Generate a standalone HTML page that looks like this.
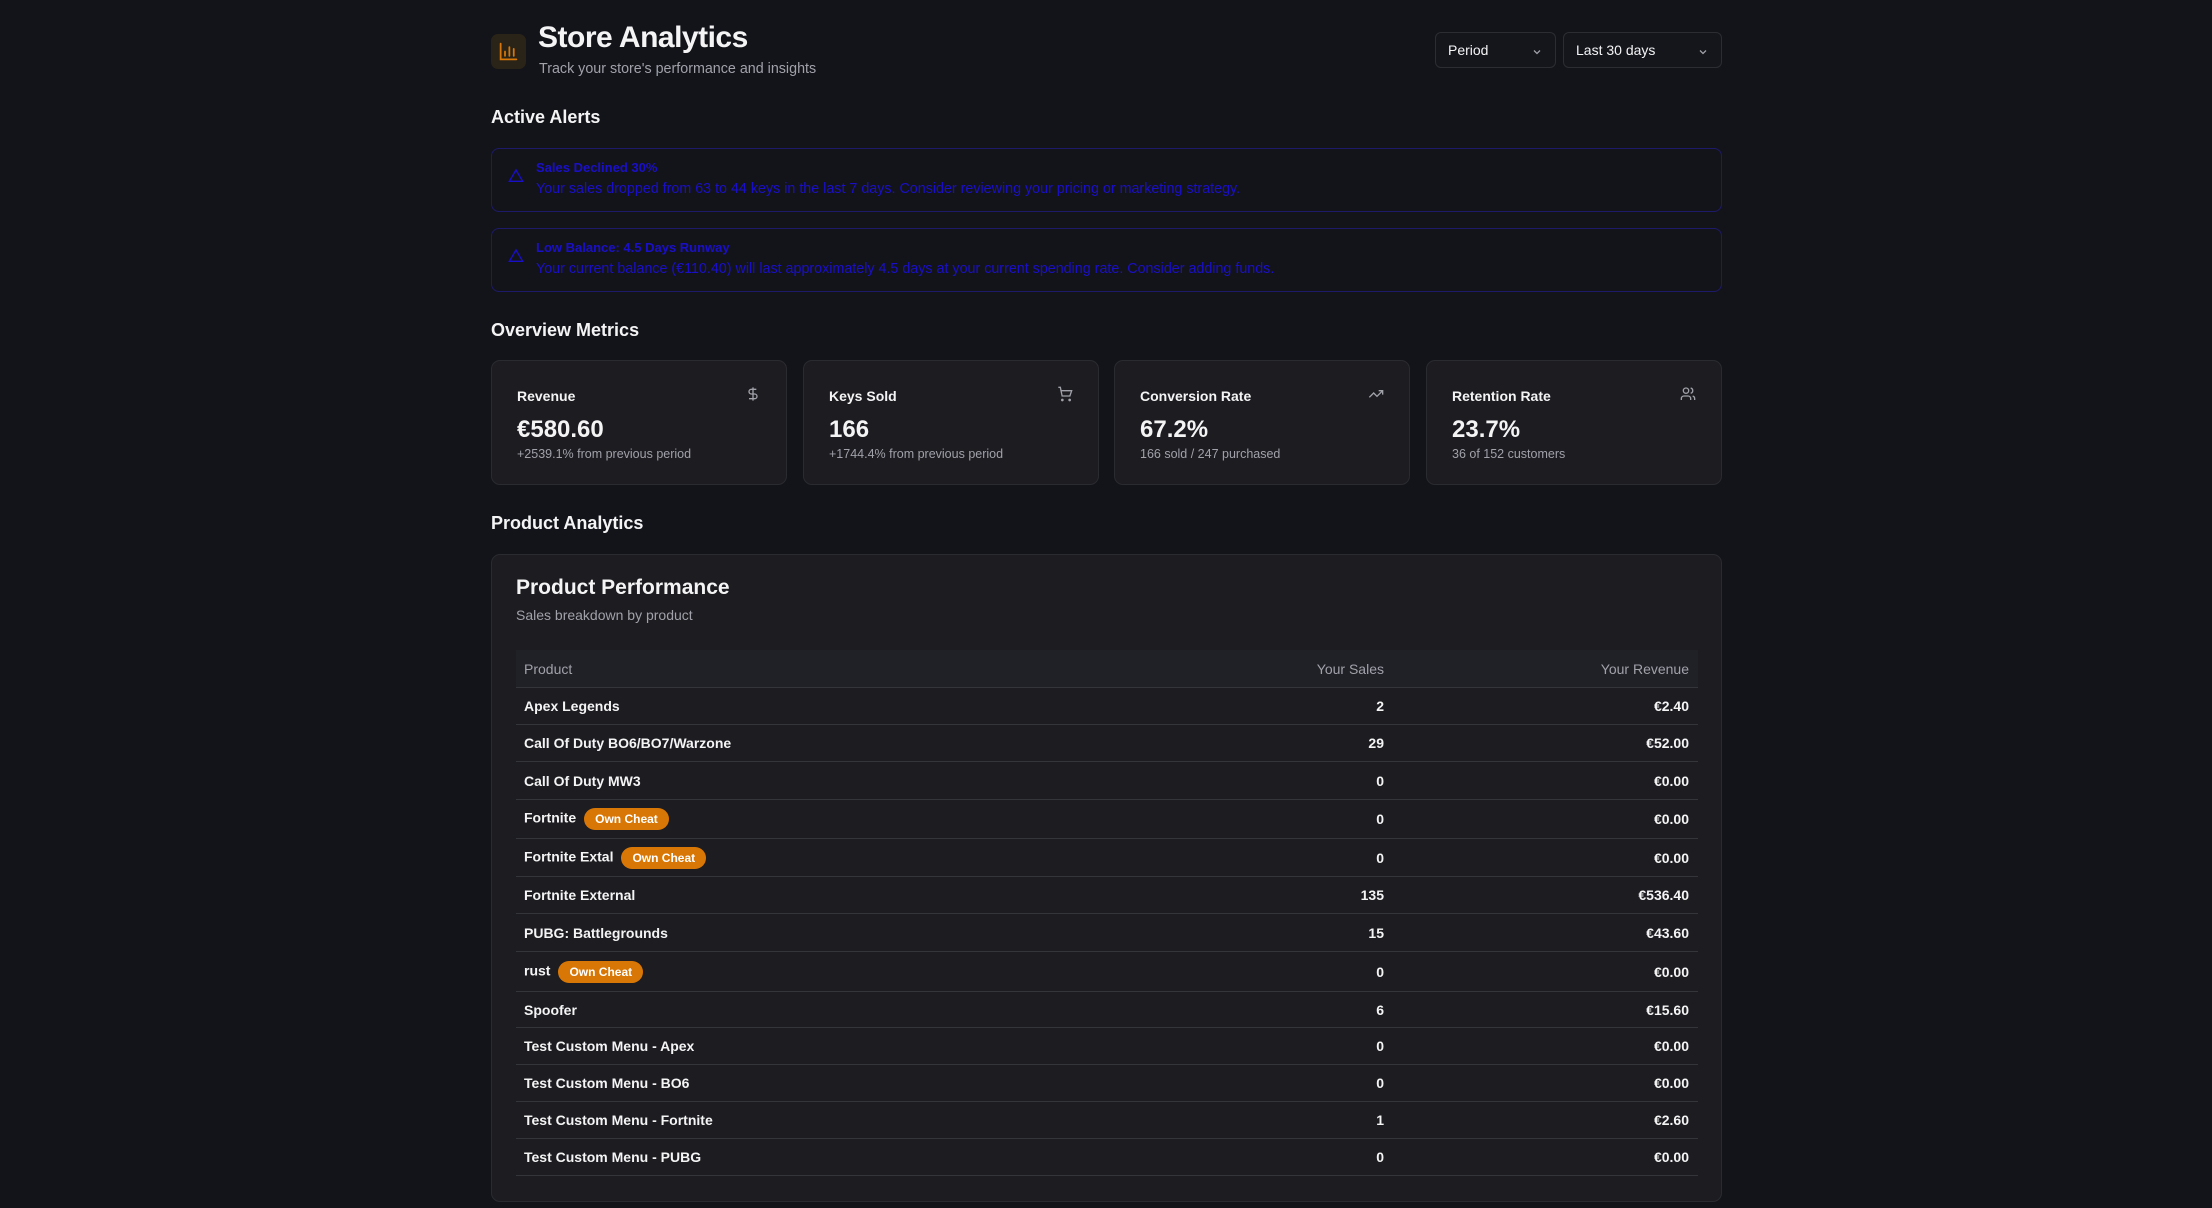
<!DOCTYPE html>
<html><head><meta charset="utf-8"><style>
*{box-sizing:border-box;margin:0;padding:0}
body{width:2212px;height:1208px;background:#13141a;font-family:"Liberation Sans",sans-serif;color:#f4f4f5;position:relative;overflow:hidden}
.a{position:absolute}
.h2{font-size:18px;font-weight:700;color:#f4f4f5}
.sel{position:absolute;top:32px;height:36px;border:1px solid #2c2d33;border-radius:6px;background:#15161c;font-size:14px;color:#f4f4f5;padding:9px 12px}
.sel svg{position:absolute;right:12px;top:13px}
.alert{position:absolute;left:491px;width:1231px;border:1px solid #1e1a6a;border-radius:8px;color:#1a0fc9}
.alert .t{position:absolute;left:44px;top:11px;font-size:13px;font-weight:700}
.alert .d{position:absolute;left:44px;top:32px;font-size:14.3px}
.alert svg{position:absolute;left:16px;top:19px}
.card{position:absolute;top:360px;width:296px;height:125px;background:#1c1c21;border:1px solid #2a2b30;border-radius:9px}
.card .l{position:absolute;left:25px;top:27px;font-size:14px;font-weight:700}
.card .v{position:absolute;left:25px;top:55px;font-size:24px;font-weight:700}
.card .s{position:absolute;left:25px;top:86px;font-size:12.5px;color:#a1a1aa}
.card svg{position:absolute;right:25px;top:25px}
.big{position:absolute;left:491px;top:554px;width:1231px;height:648px;background:#1c1c21;border:1px solid #2a2b30;border-radius:9px}
.row{position:absolute;left:516px;width:1182px;border-bottom:1px solid #34353b;font-size:14px;font-weight:600}
.row span{position:absolute;top:50%;transform:translateY(-50%)}
.c1{left:8px}.c2{right:314px}.c3{right:9px}
.b{display:inline-block;background:#d97706;color:#fff;font-size:12px;font-weight:700;border-radius:11px;padding:4px 11px;margin-left:8px;vertical-align:middle}
</style></head><body>
<div class="a" style="left:491px;top:34px;width:35px;height:35px;border-radius:7px;background:#2a2418"></div>
<svg class="a" style="left:498px;top:41px" width="21" height="21" viewBox="0 0 24 24" fill="none" stroke="#d97706" stroke-width="2" stroke-linecap="round"><path d="M3 3v18h18M8 17v-5M13 17V7M18 17v-8"/></svg>
<div class="a" style="left:538px;top:21px;font-size:30px;font-weight:700;letter-spacing:-0.5px">Store Analytics</div>
<div class="a" style="left:539px;top:61px;font-size:14.3px;color:#a1a1aa">Track your store's performance and insights</div>
<div class="sel" style="left:1435px;width:121px">Period<svg width="12" height="12" viewBox="0 0 24 24" fill="none" stroke="#a1a1aa" stroke-width="2.5"><path d="M6 9l6 6 6-6"/></svg></div>
<div class="sel" style="left:1563px;width:159px">Last 30 days<svg width="12" height="12" viewBox="0 0 24 24" fill="none" stroke="#a1a1aa" stroke-width="2.5"><path d="M6 9l6 6 6-6"/></svg></div>

<div class="a h2" style="left:491px;top:107px">Active Alerts</div>
<div class="alert" style="top:148px;height:64px"><svg width="16" height="16" viewBox="0 0 24 24" fill="none" stroke="#1a0fc9" stroke-width="2"><path d="M12 3L2 20h20z"/></svg><div class="t">Sales Declined 30%</div><div class="d">Your sales dropped from 63 to 44 keys in the last 7 days. Consider reviewing your pricing or marketing strategy.</div></div>
<div class="alert" style="top:228px;height:64px"><svg width="16" height="16" viewBox="0 0 24 24" fill="none" stroke="#1a0fc9" stroke-width="2"><path d="M12 3L2 20h20z"/></svg><div class="t">Low Balance: 4.5 Days Runway</div><div class="d">Your current balance (€110.40) will last approximately 4.5 days at your current spending rate. Consider adding funds.</div></div>

<div class="a h2" style="left:491px;top:320px">Overview Metrics</div>
<div class="card" style="left:491px"><div class="l">Revenue</div><svg width="16" height="16" viewBox="0 0 24 24" fill="none" stroke="#a1a1aa" stroke-width="2"><path d="M12 2v20M17 5H9.5a3.5 3.5 0 000 7h5a3.5 3.5 0 010 7H6"/></svg><div class="v">€580.60</div><div class="s">+2539.1% from previous period</div></div>
<div class="card" style="left:803px"><div class="l">Keys Sold</div><svg width="16" height="16" viewBox="0 0 24 24" fill="none" stroke="#a1a1aa" stroke-width="2"><circle cx="8" cy="21" r="1"/><circle cx="19" cy="21" r="1"/><path d="M2 2h3l2.7 13h11.6L22 7H6"/></svg><div class="v">166</div><div class="s">+1744.4% from previous period</div></div>
<div class="card" style="left:1114px"><div class="l">Conversion Rate</div><svg width="16" height="16" viewBox="0 0 24 24" fill="none" stroke="#a1a1aa" stroke-width="2"><path d="M22 7l-8.5 8.5-5-5L2 17M16 7h6v6"/></svg><div class="v">67.2%</div><div class="s">166 sold / 247 purchased</div></div>
<div class="card" style="left:1426px"><div class="l">Retention Rate</div><svg width="16" height="16" viewBox="0 0 24 24" fill="none" stroke="#a1a1aa" stroke-width="2"><circle cx="9" cy="7" r="4"/><path d="M16 21v-2a4 4 0 00-4-4H6a4 4 0 00-4 4v2M16 3.1a4 4 0 010 7.8M22 21v-2a4 4 0 00-3-3.9"/></svg><div class="v">23.7%</div><div class="s">36 of 152 customers</div></div>

<div class="a h2" style="left:491px;top:513px">Product Analytics</div>
<div class="big"></div>
<div class="a" style="left:516px;top:576px;font-size:21px;font-weight:700">Product Performance</div>
<div class="a" style="left:516px;top:607px;font-size:14px;color:#a1a1aa">Sales breakdown by product</div>
<div class="row" style="top:650px;height:38px;background:#202127;font-weight:400;color:#a1a1aa;font-size:14px"><span class="c1">Product</span><span class="c2">Your Sales</span><span class="c3">Your Revenue</span></div>
<div class="row" style="top:688px;height:37px"><span class="c1">Apex Legends</span><span class="c2">2</span><span class="c3">€2.40</span></div>
<div class="row" style="top:725px;height:37px"><span class="c1">Call Of Duty BO6/BO7/Warzone</span><span class="c2">29</span><span class="c3">€52.00</span></div>
<div class="row" style="top:762px;height:38px"><span class="c1">Call Of Duty MW3</span><span class="c2">0</span><span class="c3">€0.00</span></div>
<div class="row" style="top:800px;height:39px"><span class="c1">Fortnite<b class="b">Own Cheat</b></span><span class="c2">0</span><span class="c3">€0.00</span></div>
<div class="row" style="top:839px;height:38px"><span class="c1">Fortnite Extal<b class="b">Own Cheat</b></span><span class="c2">0</span><span class="c3">€0.00</span></div>
<div class="row" style="top:877px;height:37px"><span class="c1">Fortnite External</span><span class="c2">135</span><span class="c3">€536.40</span></div>
<div class="row" style="top:914px;height:38px"><span class="c1">PUBG: Battlegrounds</span><span class="c2">15</span><span class="c3">€43.60</span></div>
<div class="row" style="top:952px;height:40px"><span class="c1">rust<b class="b">Own Cheat</b></span><span class="c2">0</span><span class="c3">€0.00</span></div>
<div class="row" style="top:992px;height:36px"><span class="c1">Spoofer</span><span class="c2">6</span><span class="c3">€15.60</span></div>
<div class="row" style="top:1028px;height:37px"><span class="c1">Test Custom Menu - Apex</span><span class="c2">0</span><span class="c3">€0.00</span></div>
<div class="row" style="top:1065px;height:37px"><span class="c1">Test Custom Menu - BO6</span><span class="c2">0</span><span class="c3">€0.00</span></div>
<div class="row" style="top:1102px;height:37px"><span class="c1">Test Custom Menu - Fortnite</span><span class="c2">1</span><span class="c3">€2.60</span></div>
<div class="row" style="top:1139px;height:37px"><span class="c1">Test Custom Menu - PUBG</span><span class="c2">0</span><span class="c3">€0.00</span></div>
</body></html>
